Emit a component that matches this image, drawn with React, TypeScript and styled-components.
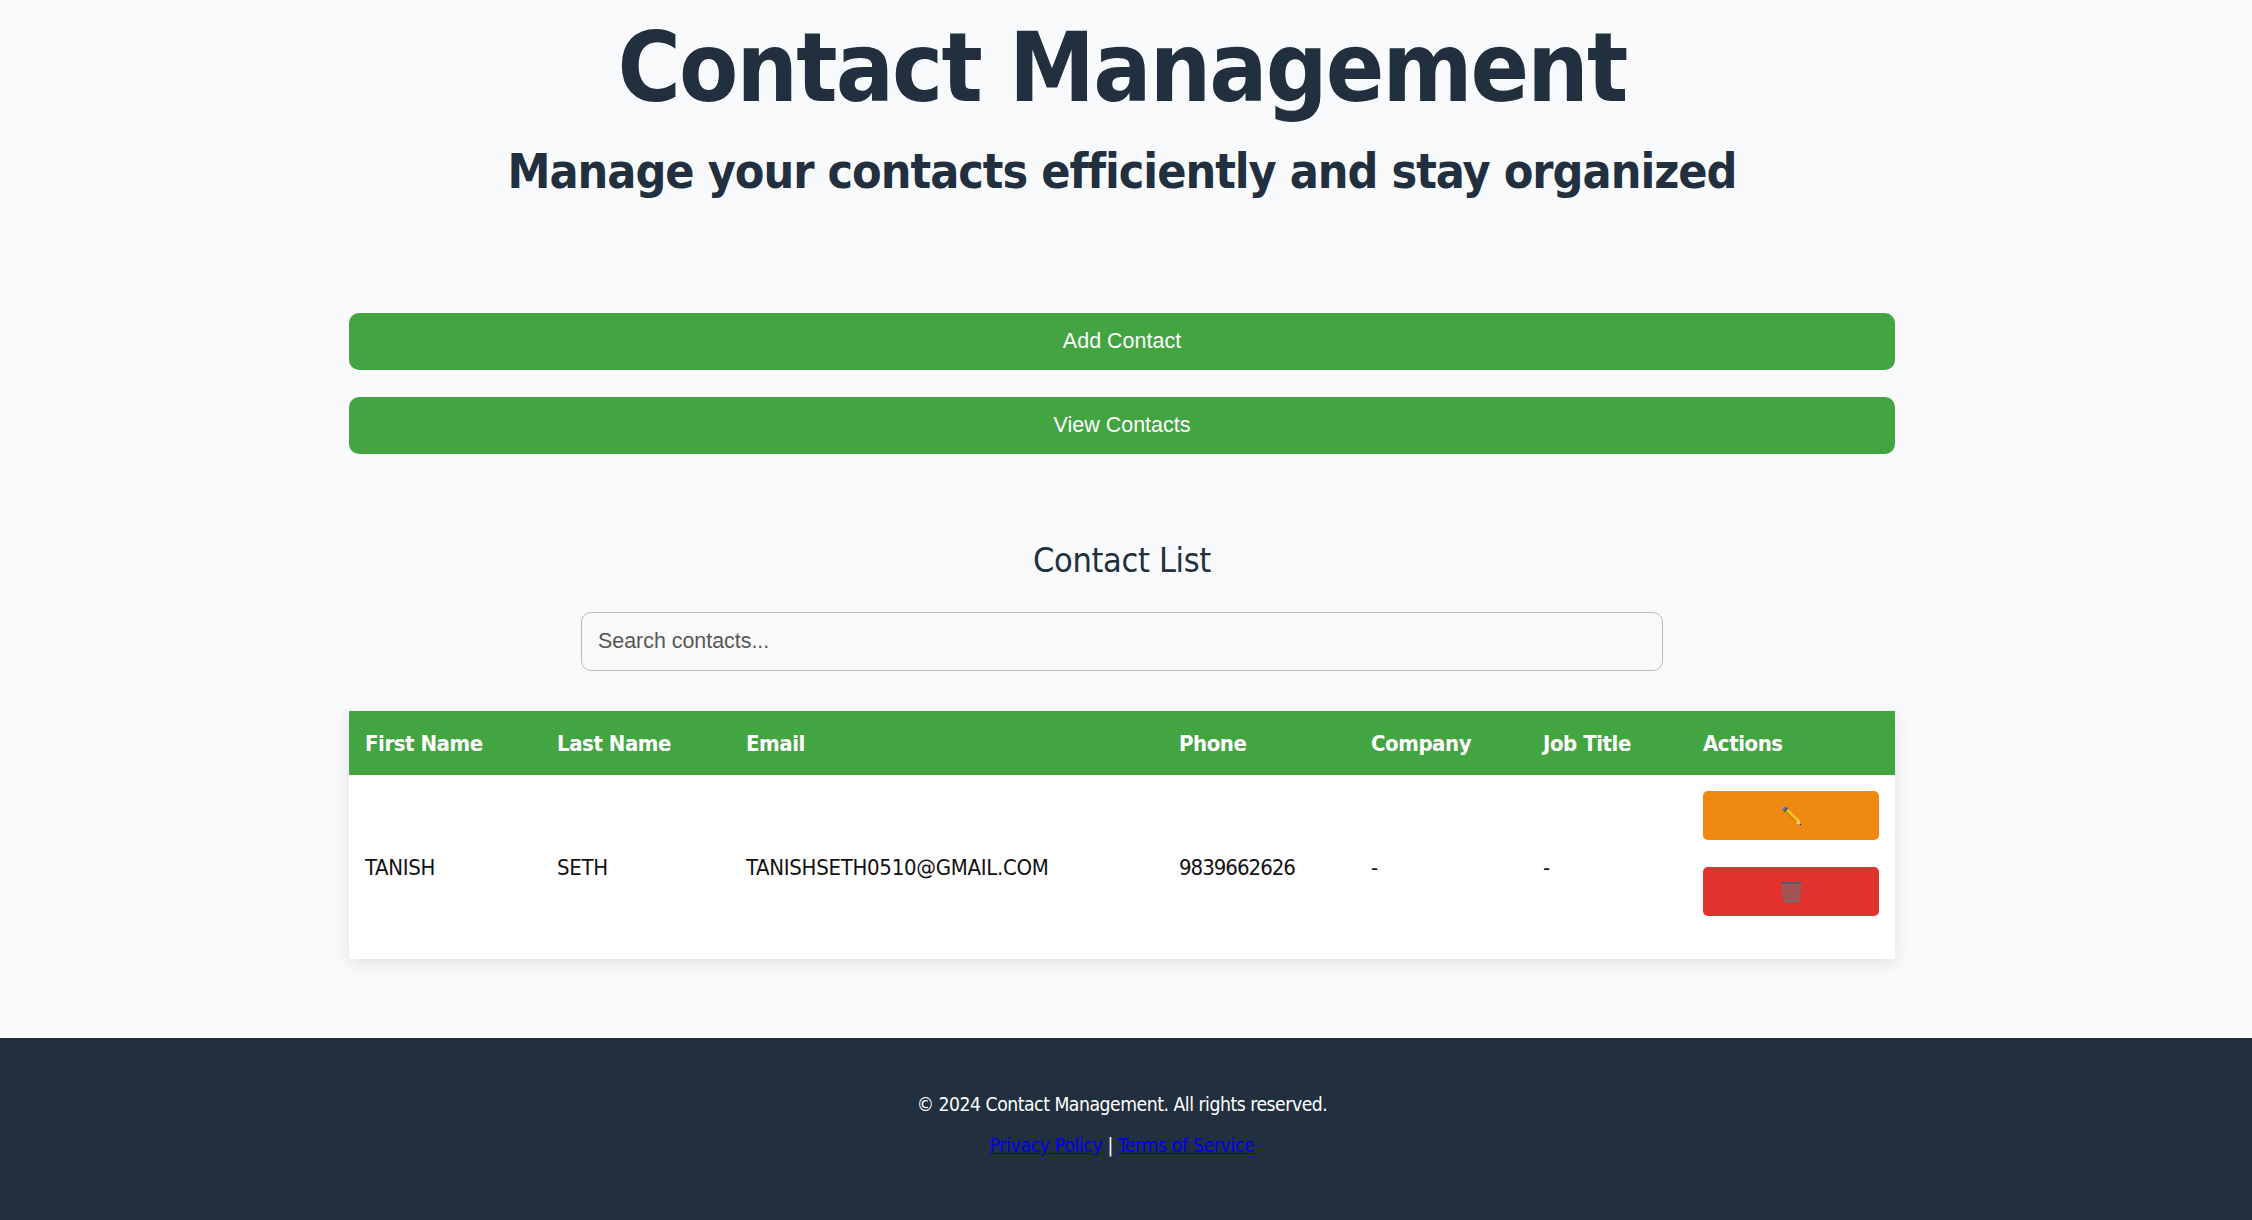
import React from 'react';
import styled, { createGlobalStyle } from 'styled-components';

const green = '#43a442';
const navy = '#212f3f';
const humanist = `"DejaVu Sans Condensed", "DejaVu Sans", Verdana, sans-serif`;
const plain = `"Liberation Sans", Arial, Helvetica, sans-serif`;

const GlobalStyle = createGlobalStyle`
  html, body {
    margin: 0;
    padding: 0;
    background: #f9fafc;
    font-family: ${humanist};
    color: ${navy};
  }
  * { box-sizing: border-box; }
`;

const Page = styled.div`
  display: flex;
  flex-direction: column;
  min-height: 1220px;
`;

const Header = styled.header`
  text-align: center;
  padding: 9px 8px 0 0;
`;

const Title = styled.h1`
  margin: 0;
  font-size: 96px;
  line-height: 118px;
  font-weight: 700;
  letter-spacing: -1.85px;
`;

const Subtitle = styled.h2`
  margin: 15px 0 0;
  font-size: 48px;
  line-height: 58px;
  font-weight: 700;
  letter-spacing: -1.01px;
`;

const Main = styled.main`
  width: 1546px;
  margin: 0 0 0 349px;
  flex: 1;
  padding-top: 113px;
`;

const ButtonStack = styled.div`
  display: flex;
  flex-direction: column;
  gap: 27px;
`;

const WideButton = styled.button`
  height: 57px;
  width: 100%;
  border: none;
  border-radius: 10px;
  background: ${green};
  color: #fff;
  font-family: ${plain};
  font-size: 21.5px;
`;

const SectionTitle = styled.h3`
  margin: 85px 0 0;
  text-align: center;
  font-size: 34px;
  line-height: 42px;
  font-weight: 400;
  letter-spacing: -0.35px;
`;

const SearchInput = styled.input`
  display: block;
  width: 1082px;
  height: 59px;
  margin: 31px auto 0;
  padding: 0 16px;
  border: 1px solid #bbb;
  border-radius: 10px;
  background: #f9f9f9;
  font-family: ${plain};
  font-size: 21.4px;
  outline: none;
  &::placeholder {
    color: #575757;
    opacity: 1;
  }
`;

const Table = styled.table`
  width: 100%;
  margin-top: 40px;
  border-collapse: collapse;
  table-layout: fixed;
  background: #fff;
  box-shadow: 0 4px 16px rgba(0, 0, 0, 0.1);
`;

const HeadCell = styled.th`
  height: 64px;
  padding: 0 16px;
  background: ${green};
  color: #fff;
  text-align: left;
  font-size: 22px;
  font-weight: 700;
  letter-spacing: -0.45px;
`;

const Cell = styled.td<{ $tracking?: number }>`
  height: 184px;
  padding: 16px;
  color: #111;
  font-size: 22px;
  vertical-align: middle;
  letter-spacing: ${(props) => props.$tracking ?? -0.3}px;
`;

const ActionCell = styled(Cell)`
  vertical-align: top;
`;

const ActionButton = styled.button<{ $bg: string }>`
  display: flex;
  align-items: center;
  justify-content: center;
  width: 100%;
  height: 49px;
  padding: 0;
  border: none;
  border-radius: 5px;
  background: ${(props) => props.$bg};
  & + & {
    margin-top: 27px;
  }
`;

const Footer = styled.footer`
  height: 182px;
  padding: 55px 8px 0 0;
  background: ${navy};
  color: #fff;
  text-align: center;
  font-size: 19.2px;
  letter-spacing: -0.47px;
`;

const FooterLine = styled.p`
  margin: 0 0 17px;
  line-height: 24px;
`;

const FooterLink = styled.a`
  color: #0000ee;
  text-decoration: underline;
  letter-spacing: -0.33px;
`;

const PencilIcon = () => (
  <svg width="21" height="21" viewBox="0 0 21 21" aria-hidden="true">
    <path d="M3.500 0.300 0.300 3.500 2 5.500 5.500 2z" fill="#ea8f9e" />
    <path d="M4.500 1 1 4.500 3 6.500 6.500 3z" fill="#5f7488" />
    <path d="M3 6.200 6.200 3 7.400 4.200 4.200 7.400z" fill="#2f3238" />
    <path d="M7 3.800 3.800 7 14.800 18 18 14.800z" fill="#f9c51c" />
    <path d="M3.800 7 5.200 5.600 16.200 16.600 14.800 18z" fill="#c8860e" />
    <path d="M14.800 18 20.500 20.500 18 14.800z" fill="#e9c9a0" />
    <path d="M18.300 19.500 20.500 20.500 19.500 18.300z" fill="#22252a" />
  </svg>
);

const TrashIcon = () => (
  <svg width="21" height="22" viewBox="0 0 21 22" aria-hidden="true">
    <defs>
      <pattern id="bin-mesh" width="2.500" height="2.500" patternUnits="userSpaceOnUse" patternTransform="rotate(30)">
        <rect width="2.500" height="2.500" fill="#b24a4a" />
        <path d="M0 0h2.500M0 0v2.500" stroke="#76696e" strokeWidth="0.800" />
      </pattern>
    </defs>
    <path d="M1.500 2.500h18L17.500 20.500h-14z" fill="url(#bin-mesh)" stroke="#6c7079" strokeWidth="1" />
    <rect x="0.500" y="0.800" width="20" height="2.200" rx="0.500" fill="#565a62" />
    <rect x="3" y="19.700" width="15" height="1.500" rx="0.500" fill="#6b7078" />
  </svg>
);

const columns = [192, 189, 433, 192, 172, 160, 208];
const headings = ['First Name', 'Last Name', 'Email', 'Phone', 'Company', 'Job Title', 'Actions'];
const contact = [
  { value: 'TANISH' },
  { value: 'SETH' },
  { value: 'TANISHSETH0510@GMAIL.COM' },
  { value: '9839662626', tracking: -1 },
  { value: '-' },
  { value: '-' },
];

const App = () => {
  return (
    <Page>
      <GlobalStyle />
      <Header>
        <Title>Contact Management</Title>
        <Subtitle>Manage your contacts efficiently and stay organized</Subtitle>
      </Header>
      <Main>
        <ButtonStack>
          <WideButton>Add Contact</WideButton>
          <WideButton>View Contacts</WideButton>
        </ButtonStack>
        <SectionTitle>Contact List</SectionTitle>
        <SearchInput placeholder="Search contacts..." />
        <Table>
          <colgroup>
            {columns.map((width, i) => <col key={i} width={width} />)}
          </colgroup>
          <thead>
            <tr>
              {headings.map((heading) => <HeadCell key={heading}>{heading}</HeadCell>)}
            </tr>
          </thead>
          <tbody>
            <tr>
              {contact.map((item, i) => <Cell key={i} $tracking={item.tracking}>{item.value}</Cell>)}
              <ActionCell>
                <ActionButton $bg="#ef8912"><PencilIcon /></ActionButton>
                <ActionButton $bg="#e0332e"><TrashIcon /></ActionButton>
              </ActionCell>
            </tr>
          </tbody>
        </Table>
      </Main>
      <Footer>
        <FooterLine>© 2024 Contact Management. All rights reserved.</FooterLine>
        <FooterLine>
          <FooterLink href="#">Privacy Policy</FooterLink> | <FooterLink href="#">Terms of Service</FooterLink>
        </FooterLine>
      </Footer>
    </Page>
  );
};

export default App;
